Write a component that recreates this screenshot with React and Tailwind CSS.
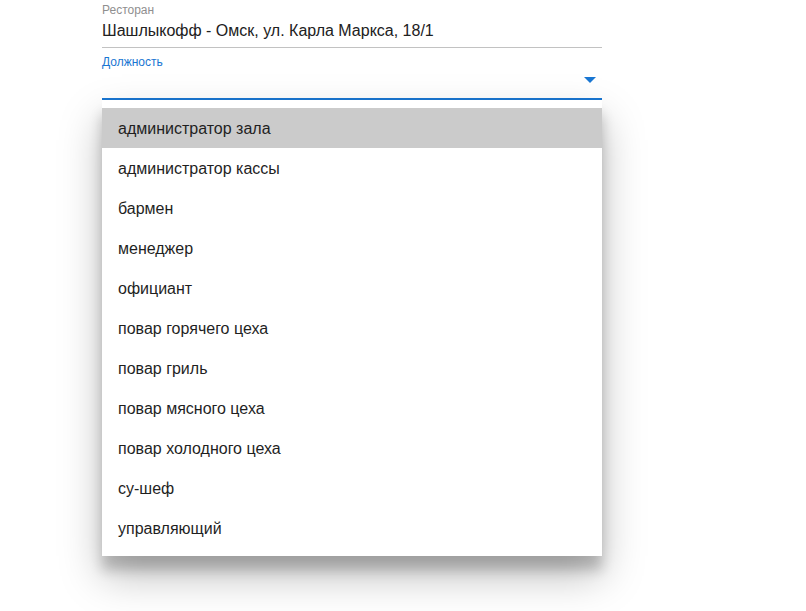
import React from 'react';

// -----------------------------------------------------------------------------
// DADOS
// -----------------------------------------------------------------------------
const positions = [
    'администратор зала',
    'администратор кассы',
    'бармен',
    'менеджер',
    'официант',
    'повар горячего цеха',
    'повар гриль',
    'повар мясного цеха',
    'повар холодного цеха',
    'су-шеф',
    'управляющий',
];

// -----------------------------------------------------------------------------
// COMPONENTE PRINCIPAL
// -----------------------------------------------------------------------------
export default function App() {
    return (
        <main className="min-h-[611px] w-[806px] bg-white pl-[102px] pt-[3px] font-['Liberation_Sans',Arial,sans-serif]">
            <div className="w-[500px]">
                {/* Ресторан */}
                <div className="border-b border-[#c2c2c2]">
                    <label className="block text-[12px] leading-[14px] text-[#8f8f8f]">Ресторан</label>
                    <div className="h-[30px] pt-[2px] text-[16px] leading-[24px] text-[#212121]">
                        Шашлыкофф - Омск, ул. Карла Маркса, 18/1
                    </div>
                </div>

                {/* Должность */}
                <div className="mt-[7px] border-b-2 border-[#1976d2]">
                    <label className="block text-[12px] leading-[14px] text-[#1976d2]">Должность</label>
                    <div className="relative h-[29px]">
                        <svg width="12" height="6" viewBox="0 0 12 6" className="absolute right-[6px] top-[8px]">
                            <path d="M0 0 L12 0 L6 6 Z" fill="#1976d2" />
                        </svg>
                    </div>
                </div>

                {/* Menu */}
                <ul className="bg-white py-2 shadow-[0_20px_40px_rgba(0,0,0,0.26),0_14px_12px_rgba(0,0,0,0.2)]">
                    {positions.map((p, i) => (
                        <li
                            key={p}
                            className={`flex h-10 items-center px-4 pt-px text-[16px] text-[#1f1f1f] ${i === 0 ? 'bg-[#cbcbcb]' : ''}`}
                        >
                            {p}
                        </li>
                    ))}
                </ul>
            </div>
        </main>
    );
}
